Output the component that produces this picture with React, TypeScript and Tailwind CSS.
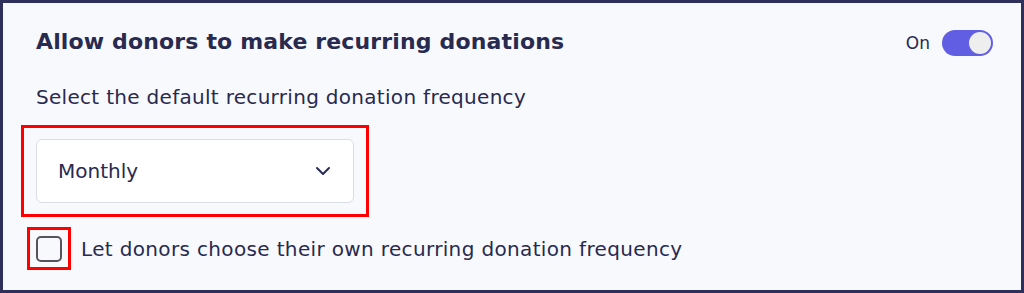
import { useState } from "react";

export default function App() {
  const [on, setOn] = useState(true);
  const [own, setOwn] = useState(false);

  return (
    <div className="h-[293px] w-[1024px] border-[3px] border-[#2e2f5a] bg-[#f8f9fd] font-['DejaVu_Sans',sans-serif] text-[#282a4f]">
      <div className="flex items-start justify-between pl-[33px] pr-[28px] pt-[25px]">
        <h2 className="text-[22px] font-bold leading-[28px] tracking-[0.15px]">
          Allow donors to make recurring donations
        </h2>
        <div className="mt-[2px] flex items-center gap-3">
          <span className="text-[17px] leading-[26px]">{on ? "On" : "Off"}</span>
          <button
            type="button"
            onClick={() => setOn(!on)}
            className="flex h-[26px] w-[51px] items-center justify-end rounded-full bg-[#625ee3] px-[2px]"
          >
            <span className="h-[22px] w-[22px] rounded-full bg-[#eeeeee]" />
          </button>
        </div>
      </div>

      <p className="mt-[28px] pl-[33px] text-[20px] leading-[26px] tracking-[0.3px]">
        Select the default recurring donation frequency
      </p>

      <div className="ml-[18px] mt-[15px] w-[348px] border-[3px] border-[#ff0000] px-3 py-[11px]">
        <div className="flex h-[64px] items-center justify-between rounded-md border border-[#d9dde6] bg-white pl-[21px] pr-[22px]">
          <span className="text-[20px] leading-[26px]">Monthly</span>
          <svg width="16" height="10" viewBox="0 0 16 10" fill="none">
            <path d="M2 2l6 6 6-6" stroke="#2a2c55" strokeWidth="2" strokeLinecap="round" strokeLinejoin="round" />
          </svg>
        </div>
      </div>

      <div className="mt-[10px] flex items-center gap-[10px] pl-[24px]">
        <div className="border-[3px] border-[#ff0000] px-[6px] pb-[5px] pt-[6px]">
          <button
            type="button"
            onClick={() => setOwn(!own)}
            className="block h-[26px] w-[26px] rounded-[5px] border-2 border-[#57535e] bg-[#f8f9fd]"
          />
        </div>
        <span className="text-[20px] leading-[26px] tracking-[0.35px]">
          Let donors choose their own recurring donation frequency
        </span>
      </div>
    </div>
  );
}
